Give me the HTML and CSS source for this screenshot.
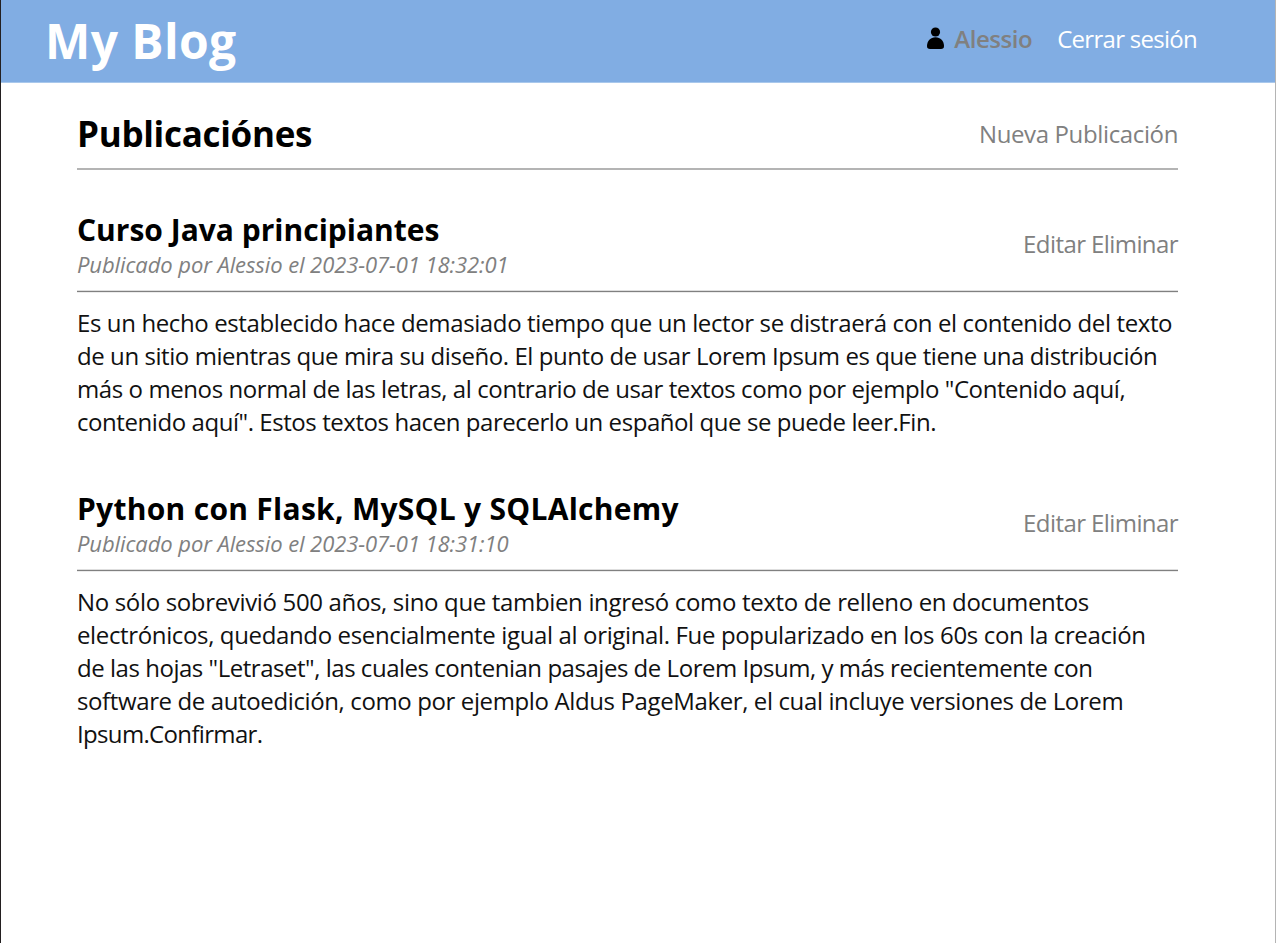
FILE: index.html
```
<!DOCTYPE html>
<html lang="es">
<head>
<meta charset="utf-8">
<title>My Blog</title>
<link rel="stylesheet" href="styles.css">
</head>
<body>
<div class="page">
  <header class="navbar">
    <h1 class="brand">My Blog</h1>
    <nav class="nav-links">
      <svg class="user-icon" viewBox="0 0 17 23"><circle cx="8.5" cy="5" r="4.6"/><path d="M0 19C0 14 3.500 10.300 8.500 10.300S17 14 17 19C17 21.300 16 22 14 22H3C1 22 0 21.300 0 19Z"/></svg>
      <span class="user">Alessio</span>
      <a class="logout">Cerrar sesión</a>
    </nav>
  </header>
  <main class="content">
    <div class="section-head">
      <h2 class="section-title">Publicaciónes</h2>
      <a class="action new-post">Nueva Publicación</a>
    </div>
    <article class="post">
      <div class="post-head">
        <div>
          <h3 class="post-title">Curso Java principiantes</h3>
          <div class="meta">Publicado por Alessio el 2023-07-01 18:32:01</div>
        </div>
        <div class="actions"><a class="action">Editar</a> <a class="action">Eliminar</a></div>
      </div>
      <p class="text"><span class="line">Es un hecho establecido hace demasiado tiempo que un lector se distraerá con el contenido del texto</span> <span class="line snug">de un sitio mientras que mira su diseño. El punto de usar Lorem Ipsum es que tiene una distribución</span> <span class="line close">más o menos normal de las letras, al contrario de usar textos como por ejemplo "Contenido aquí,</span> <span class="line snug">contenido aquí". Estos textos hacen parecerlo un español que se puede leer.Fin.</span></p>
    </article>
    <article class="post">
      <div class="post-head">
        <div>
          <h3 class="post-title wide">Python con Flask, MySQL y SQLAlchemy</h3>
          <div class="meta">Publicado por Alessio el 2023-07-01 18:31:10</div>
        </div>
        <div class="actions"><a class="action">Editar</a> <a class="action">Eliminar</a></div>
      </div>
      <p class="text"><span class="line loose">No sólo sobrevivió 500 años, sino que tambien ingresó como texto de relleno en documentos</span> <span class="line snugger">electrónicos, quedando esencialmente igual al original. Fue popularizado en los 60s con la creación</span> <span class="line tight">de las hojas "Letraset", las cuales contenian pasajes de Lorem Ipsum, y más recientemente con</span> <span class="line">software de autoedición, como por ejemplo Aldus PageMaker, el cual incluye versiones de Lorem</span> <span class="line tightest">Ipsum.Confirmar.</span></p>
    </article>
  </main>
</div>
</body>
</html>
```
FILE: styles.css
```
* { box-sizing: border-box; }
body { margin: 0; background: #fff; color: #111; font-family: "Open Sans", "Noto Sans", sans-serif; font-size: 24px; line-height: 33px; }
h1, h2, h3, p { margin: 0; }
.page { height: 943px; overflow: hidden; border-left: 1px solid #231f20; border-right: 1px solid #b4b4b4; }
.navbar { display: flex; justify-content: space-between; align-items: center; height: 83px; padding: 0 78px 0 44px; background: #81ade3; border-bottom: 1px solid #a9c8ec; }
.brand { color: #fff; font-size: 48px; line-height: 66px; letter-spacing: 0.4px; }
.nav-links { display: flex; align-items: center; padding-bottom: 5px; }
.user-icon { width: 17px; height: 23px; margin-right: 10px; }
.user { color: gray; font-weight: 600; letter-spacing: -0.45px; margin-right: 25px; }
.logout { color: #fff; letter-spacing: -0.72px; }
.content { padding: 26px 97px 0 76px; }
.section-head { display: flex; justify-content: space-between; align-items: center; height: 61px; padding-bottom: 9px; border-bottom: 2px solid #b4b4b4; }
.section-title { color: #000; font-size: 35px; line-height: 50px; letter-spacing: -0.3px; }
.action { color: gray; }
.new-post { padding-bottom: 2px; letter-spacing: -0.37px; }
.post { margin-top: 40px; }
.post-head { display: flex; justify-content: space-between; align-items: center; height: 82px; padding-bottom: 11px; border-bottom: 1px solid gray; box-shadow: 0 1px 0 #ececec, inset 0 -1px 0 #dedede; }
.post-title { color: #000; font-size: 30px; line-height: 38px; }
.post-title.wide { letter-spacing: 0.28px; }
.meta { color: gray; font-size: 22px; line-height: 30px; font-style: italic; letter-spacing: -0.09px; }
.actions { padding-bottom: 4px; letter-spacing: -0.58px; }
.text { padding: 14px 0 11px; }
.line { display: block; white-space: nowrap; letter-spacing: -0.38px; }
.line.loose { letter-spacing: -0.34px; }
.line.snugger { letter-spacing: -0.36px; }
.line.close { letter-spacing: -0.41px; }
.line.snug { letter-spacing: -0.434px; }
.line.tight { letter-spacing: -0.47px; }
.line.tightest { letter-spacing: -0.66px; }
```
